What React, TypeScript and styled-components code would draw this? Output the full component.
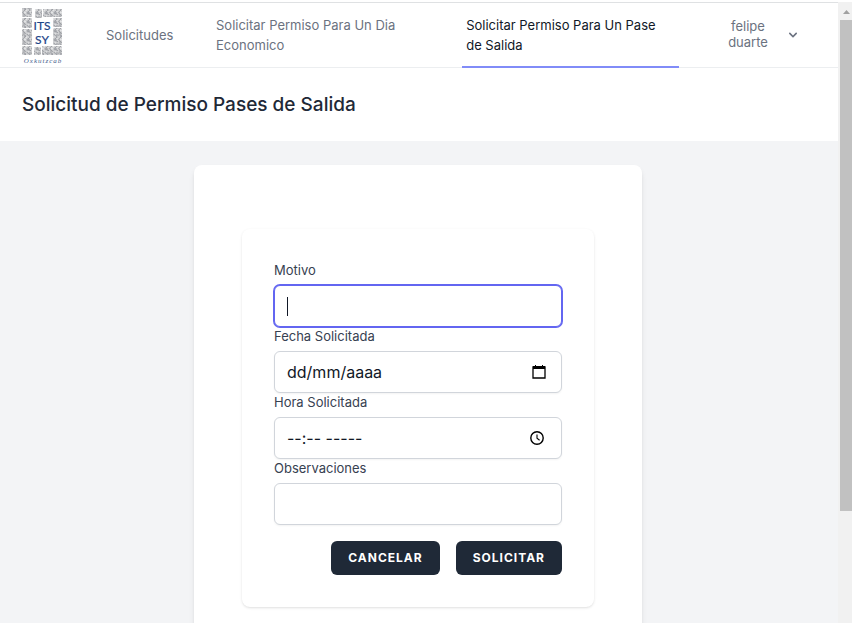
import React from "react";
import styled, { createGlobalStyle, css } from "styled-components";

const GlobalStyle = createGlobalStyle`
  *, *::before, *::after { box-sizing: border-box; }
  body {
    margin: 0;
    font-family: Inter, Roboto, sans-serif;
    font-size: 16px;
    line-height: 24px;
    color: #111827;
    background: #f3f4f6;
  }
  button, input { font: inherit; color: inherit; }
`;

const Viewport = styled.div`
  display: flex;
  height: 100vh;
  overflow: hidden;
  border-top: 2px solid #fff;
`;

const Page = styled.div`
  flex: 1;
  min-width: 0;
  overflow: hidden;
  border-top: 1px solid #dfe1e3;
`;

const Nav = styled.nav`
  display: flex;
  height: 65px;
  padding: 0 25px 0 22px;
  background: #fff;
  border-bottom: 1px solid #eceef0;
`;

const LogoLink = styled.a`
  display: flex;
  flex-shrink: 0;
  align-items: flex-end;
  width: 80px;
`;

const NavLinks = styled.div`
  display: flex;
  flex: 1;
  gap: 32px;
  margin-bottom: -1px;
`;

const NavLink = styled.a<{ $active?: boolean; $wide?: boolean }>`
  display: flex;
  align-items: center;
  padding: 0 4px;
  font-size: 13px;
  line-height: 20px;
  text-decoration: none;
  color: ${(p) => (p.$active ? "#111827" : "#6b7280")};
  border-bottom: 2px solid ${(p) => (p.$active ? "#818cf8" : "transparent")};
  ${(p) => p.$wide ? css`flex: 1 1 auto; padding-right: 12px;` : css`flex: 0 0 78px;`}
`;

const UserButton = styled.button`
  display: flex;
  flex-shrink: 0;
  align-items: center;
  width: 110px;
  margin-left: 24px;
  padding: 0 12px;
  border: 0;
  background: transparent;
  font-size: 13px;
  line-height: 16px;
  color: #6b7280;
`;

const UserName = styled.span`
  flex: 1;
  padding: 0 8px 2px;
  text-align: center;
`;

const Chevron = styled.svg`
  width: 16px;
  height: 16px;
  margin-left: 4px;
`;

const Header = styled.header`
  padding: 25px 22px 24px;
  background: #fff;
`;

const Title = styled.h2`
  margin: 0;
  font-size: 19px;
  font-weight: 500;
  line-height: 24px;
  color: #1f2937;
`;

const Main = styled.main`
  display: flex;
  justify-content: center;
  padding: 24px 24px 48px 22px;
`;

const OuterCard = styled.section`
  width: 100%;
  max-width: 448px;
  padding: 64px 48px;
  background: #fff;
  border-radius: 8px;
  box-shadow: 0 4px 6px -1px rgba(0, 0, 0, 0.1), 0 2px 4px -2px rgba(0, 0, 0, 0.1);
`;

const Form = styled.form`
  padding: 32px;
  border-radius: 8px;
  box-shadow: 0 1px 3px rgba(0, 0, 0, 0.1), 0 1px 2px -1px rgba(0, 0, 0, 0.1);
`;

const Label = styled.label`
  display: block;
  margin-bottom: 6px;
  font-size: 13px;
  line-height: 18px;
  color: #374151;
`;

const Field = styled.div<{ $active?: boolean }>`
  display: flex;
  align-items: center;
  height: 42px;
  padding: 0 12px;
  background: #fff;
  border: 1px solid ${(p) => (p.$active ? "#6366f1" : "#d1d5db")};
  border-radius: 6px;
  box-shadow: ${(p) => (p.$active ? "0 0 0 1px #6366f1" : "0 1px 2px rgba(0, 0, 0, 0.05)")};
`;

const Input = styled.input<{ $caret?: boolean }>`
  flex: 1;
  min-width: 0;
  height: 24px;
  padding: 0;
  border: 0;
  outline: 0;
  background: transparent;
  &::placeholder { color: #111827; opacity: 1; }
  ${(p) => p.$caret && css`
    caret-color: transparent;
    &:placeholder-shown {
      background: linear-gradient(#111827, #111827) 0 center / 1px 19px no-repeat;
    }
  `}
`;

const PickerButton = styled.button`
  display: flex;
  padding: 0;
  margin-right: 3px;
  border: 0;
  background: transparent;
`;

const Actions = styled.div`
  display: flex;
  justify-content: flex-end;
  gap: 16px;
  margin-top: 16px;
`;

const ActionButton = styled.button`
  height: 34px;
  padding: 0 16px;
  border: 1px solid transparent;
  border-radius: 6px;
  background: #1f2937;
  color: #fff;
  font-size: 12px;
  font-weight: 700;
  line-height: 16px;
  letter-spacing: 1px;
  text-transform: uppercase;
`;

const Scrollbar = styled.aside`
  width: 14px;
  padding-left: 2px;
  background: #f1f1f1;
`;

const ScrollArrow = styled.svg`
  display: block;
  width: 12px;
  height: 18px;
`;

const ScrollThumb = styled.div`
  height: 79%;
  background: #c1c1c1;
`;

const blocks = [
  { x: 0, y: 1, w: 10, h: 9 }, { x: 0, y: 11, w: 10, h: 10 },
  { x: 0, y: 22, w: 10, h: 16 }, { x: 0, y: 39, w: 10, h: 9 },
  { x: 13, y: 2, w: 7, h: 9 }, { x: 21, y: 2, w: 19, h: 8 },
  { x: 31, y: 11, w: 9, h: 9 }, { x: 31, y: 21, w: 9, h: 17 },
  { x: 12, y: 40, w: 7, h: 8 }, { x: 20, y: 39, w: 20, h: 9 },
];

function Logo() {
  return (
    <svg width="42" height="60" viewBox="0 0 42 60" role="img" aria-label="ITS SY Oxkutzcab">
      <defs>
        <pattern id="carving" width="9" height="9" patternUnits="userSpaceOnUse">
          <rect width="9" height="9" fill="#cfd0d2" />
          <path
            d="M0 1.500C2 0 4 1 3 3S0 4 1 6s3 2 3 3M5 0c0 2 3 1 3 3S5 4 5 6s3 0 4 2M2 2h2v1M6 5h1v2H6M1 8h2M7 1h2"
            fill="none" stroke="#8f9298" strokeWidth="0.8"
          />
          <path d="M4 4l1-2M8 4v1M2 5l2 1M6 8h1" stroke="#fff" strokeWidth="0.6" />
        </pattern>
      </defs>
      {blocks.map((b) => (
        <rect key={`${b.x}-${b.y}`} x={b.x} y={b.y} width={b.w} height={b.h} rx="1" fill="url(#carving)" />
      ))}
      <g fill="#1d4488" stroke="#1d4488" strokeWidth="0.2" fontFamily="Lato, sans-serif" fontSize="12" textAnchor="middle">
        <text x="20" y="23">ITS</text>
        <text x="20" y="37">SY</text>
      </g>
      <text x="21" y="56" textAnchor="middle" fill="#435c8c" fontSize="7" letterSpacing="1" fontStyle="italic" fontFamily="Liberation Serif, serif">Oxkutzcab</text>
    </svg>
  );
}

const CalendarIcon = () => (
  <svg width="14" height="16" viewBox="0 0 14 16" aria-hidden="true">
    <path d="M1 3h12v11H1z" fill="none" stroke="#000" strokeWidth="1.300" />
    <path d="M1 2h12v3H1zM3 1h1v2H3zM10 1h1v2h-1z" fill="#000" />
  </svg>
);

const ClockIcon = () => (
  <svg width="16" height="16" viewBox="0 0 16 16" fill="none" stroke="#000" aria-hidden="true">
    <circle cx="7" cy="8" r="6.200" strokeWidth="1.400" />
    <path d="M7 4.500V8.300l2.600 2" strokeWidth="1.100" />
  </svg>
);

export default function App() {
  return (
    <>
      <GlobalStyle />
      <Viewport>
        <Page>
          <Nav>
            <LogoLink href="#"><Logo /></LogoLink>
            <NavLinks>
              <NavLink href="#">Solicitudes</NavLink>
              <NavLink href="#" $wide>Solicitar Permiso Para Un Dia Economico</NavLink>
              <NavLink href="#" $wide $active aria-current="page">Solicitar Permiso Para Un Pase de Salida</NavLink>
            </NavLinks>
            <UserButton type="button">
              <UserName>felipe duarte</UserName>
              <Chevron viewBox="0 0 20 20" fill="currentColor" aria-hidden="true">
                <path fillRule="evenodd" clipRule="evenodd" d="M5.293 7.293a1 1 0 011.414 0L10 10.586l3.293-3.293a1 1 0 111.414 1.414l-4 4a1 1 0 01-1.414 0l-4-4a1 1 0 010-1.414z" />
              </Chevron>
            </UserButton>
          </Nav>
          <Header><Title>Solicitud de Permiso Pases de Salida</Title></Header>
          <Main>
            <OuterCard>
              <Form onSubmit={(e) => e.preventDefault()}>
                <Label htmlFor="motivo">Motivo</Label>
                <Field $active><Input id="motivo" type="text" placeholder=" " $caret autoFocus /></Field>
                <Label htmlFor="fecha">Fecha Solicitada</Label>
                <Field>
                  <Input id="fecha" type="text" placeholder="dd/mm/aaaa" />
                  <PickerButton type="button" aria-label="Elegir fecha"><CalendarIcon /></PickerButton>
                </Field>
                <Label htmlFor="hora">Hora Solicitada</Label>
                <Field>
                  <Input id="hora" type="text" placeholder="--:-- -----" />
                  <PickerButton type="button" aria-label="Elegir hora"><ClockIcon /></PickerButton>
                </Field>
                <Label htmlFor="observaciones">Observaciones</Label>
                <Field><Input id="observaciones" type="text" /></Field>
                <Actions>
                  <ActionButton type="button">Cancelar</ActionButton>
                  <ActionButton type="submit">Solicitar</ActionButton>
                </Actions>
              </Form>
            </OuterCard>
          </Main>
        </Page>
        <Scrollbar aria-hidden="true">
          <ScrollArrow viewBox="0 0 12 18"><path d="M3 12l3.500-4 3.500 4z" fill="#a0a0a0" /></ScrollArrow>
          <ScrollThumb />
        </Scrollbar>
      </Viewport>
    </>
  );
}
